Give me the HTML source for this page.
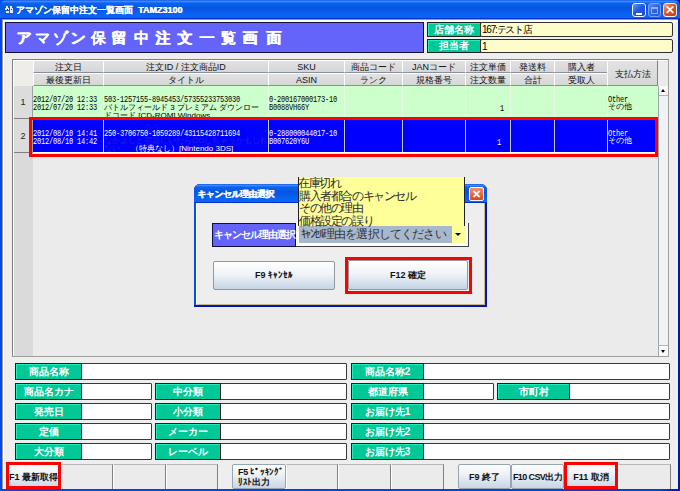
<!DOCTYPE html><html><head><meta charset="utf-8"><style>
*{margin:0;padding:0;box-sizing:border-box}
html,body{width:680px;height:491px;overflow:hidden;background:linear-gradient(90deg,#0048f0,#0048f0 670px,#0010b0 680px);font-family:"Liberation Sans",sans-serif}
div{position:absolute}
.gl{background:#00c896;box-shadow:inset 1px 1px 0 #20f0c0;border:1px solid #202020;color:#fff;font-weight:bold;font-size:10px;text-align:center;line-height:14px;white-space:nowrap}
.wi{background:#fff;border:1px solid #383838;border-radius:1px}
.hc{background:linear-gradient(#e2e2e2,#d6d6d6);border-top:1px solid #fff;border-bottom:1px solid #8890a0;border-right:1px solid #7880a0;color:#111;font-size:9px;text-align:center;line-height:11px;padding-top:1px;white-space:nowrap;overflow:hidden}
.fk{background:linear-gradient(#fdfdfd,#eef2f6 40%,#c8d6e4);border:1px solid #98a4b0;border-radius:2px;color:#111;font-weight:bold;font-size:9px;text-align:center;white-space:nowrap;letter-spacing:-0.7px}
.fe{background:#ebebeb;border-right:1px solid #808080;border-left:1px solid #fff;border-top:1px solid #b8b8b8}
</style></head><body>
<div style="position:absolute;left:0px;top:0px;width:680px;height:19px;background:linear-gradient(#1a5ae6 0px,#3a8aff 1.5px,#0a64f2 3px,#0556e0 8px,#0a62f2 14px,#0a64f4 17.5px,#0030d0 18px,#0030d0 19px);border-radius:6px 6px 0 0"></div>
<svg style="position:absolute;left:5px;top:6px" width="9" height="8" viewBox="0 0 9 8"><g fill="#e8e8ff"><rect x="1" y="0" width="2" height="2"/><rect x="5" y="0" width="2" height="2" fill="#f0f0a0"/><rect x="0" y="2" width="4" height="2"/><rect x="5" y="2" width="3" height="3"/><rect x="1" y="5" width="3" height="2"/><rect x="5" y="5" width="3" height="2"/></g><rect x="2" y="3" width="1" height="1" fill="#1030a0"/><rect x="6" y="3" width="1" height="1" fill="#1030a0"/></svg>
<div style="position:absolute;left:16px;top:3px;width:284px;height:14px;color:#fff;font-size:9px;font-weight:bold;line-height:14px;white-space:nowrap;letter-spacing:0px;text-shadow:0.4px 0 0 #fff">アマゾン保留中注文一覧画面&nbsp;&nbsp;TAMZ3100</div>
<div style="position:absolute;left:632px;top:3px;width:14px;height:14px;background:linear-gradient(135deg,#6a9af4,#2458e4 45%,#1a4ad8);border:1px solid #f0f4ff;border-radius:3px"><div style="left:3px;top:9px;width:6px;height:2px;background:#fff"></div></div>
<div style="position:absolute;left:648px;top:3px;width:13px;height:14px;background:linear-gradient(135deg,#5a8cf0,#2a64e8 50%,#2458e0);border:1px solid #7aa0f0;border-radius:3px"><div style="left:2px;top:3px;width:7px;height:7px;border:1px solid #8ab0f0;border-top-width:2px"></div></div>
<div style="position:absolute;left:663px;top:3px;width:14px;height:14px;background:linear-gradient(135deg,#f0a080,#e05424 45%,#c83c10);border:1px solid #f8f0f0;border-radius:3px;color:#fff;font-size:12px;font-weight:bold;line-height:13px;text-align:center">✕</div>
<div style="position:absolute;left:2px;top:19px;width:676px;height:470px;background:#eeeeee;border-top:1px solid #a09c80;border-left:1px solid #a09c80"></div>
<div style="position:absolute;left:3px;top:20px;width:675px;height:2px;background:#fff"></div>
<div style="position:absolute;left:3px;top:20px;width:1px;height:469px;background:#fff"></div>
<div style="position:absolute;left:5px;top:22px;width:419px;height:31px;background:#6464fa;border:1px solid #101040"><div style="left:10.0px;top:6px;color:#fff;font-size:15px;font-weight:bold;line-height:17px;text-shadow:0.6px 0 0 #fff">ア</div><div style="left:28.5px;top:6px;color:#fff;font-size:15px;font-weight:bold;line-height:17px;text-shadow:0.6px 0 0 #fff">マ</div><div style="left:46.7px;top:6px;color:#fff;font-size:15px;font-weight:bold;line-height:17px;text-shadow:0.6px 0 0 #fff">ゾ</div><div style="left:64.4px;top:6px;color:#fff;font-size:15px;font-weight:bold;line-height:17px;text-shadow:0.6px 0 0 #fff">ン</div><div style="left:84.5px;top:6px;color:#fff;font-size:15px;font-weight:bold;line-height:17px;text-shadow:0.6px 0 0 #fff">保</div><div style="left:105.0px;top:6px;color:#fff;font-size:15px;font-weight:bold;line-height:17px;text-shadow:0.6px 0 0 #fff">留</div><div style="left:127.7px;top:6px;color:#fff;font-size:15px;font-weight:bold;line-height:17px;text-shadow:0.6px 0 0 #fff">中</div><div style="left:149.0px;top:6px;color:#fff;font-size:15px;font-weight:bold;line-height:17px;text-shadow:0.6px 0 0 #fff">注</div><div style="left:171.0px;top:6px;color:#fff;font-size:15px;font-weight:bold;line-height:17px;text-shadow:0.6px 0 0 #fff">文</div><div style="left:193.0px;top:6px;color:#fff;font-size:15px;font-weight:bold;line-height:17px;text-shadow:0.6px 0 0 #fff">一</div><div style="left:214.8px;top:6px;color:#fff;font-size:15px;font-weight:bold;line-height:17px;text-shadow:0.6px 0 0 #fff">覧</div><div style="left:236.0px;top:6px;color:#fff;font-size:15px;font-weight:bold;line-height:17px;text-shadow:0.6px 0 0 #fff">画</div><div style="left:260.0px;top:6px;color:#fff;font-size:15px;font-weight:bold;line-height:17px;text-shadow:0.6px 0 0 #fff">面</div></div>
<div style="position:absolute;left:427px;top:22px;width:54px;height:15px;"></div>
<div class="gl" style="left:427px;top:22px;width:54px;height:15px">店舗名称</div>
<div style="left:480px;top:22px;width:193px;height:15px;border-radius:2px;background:#fffccc;border:1px solid #303030;font-size:10px;line-height:13px;color:#000;padding-left:1px;white-space:nowrap;letter-spacing:-1.2px">167:テスト店</div>
<div class="gl" style="left:427px;top:39px;width:54px;height:14px;line-height:12px">担当者</div>
<div style="left:480px;top:39px;width:193px;height:14px;border-radius:2px;background:#fffccc;border:1px solid #303030;font-size:10px;line-height:13px;color:#000;padding-left:1px">1</div>
<div style="position:absolute;left:12px;top:59px;width:657px;height:298px;background:#ebebeb;border-top:1px solid #808080;border-left:1px solid #808080;border-bottom:1px solid #a0a0a0;border-right:1px solid #a0a0a0"></div>
<div style="position:absolute;left:13px;top:60px;width:655px;height:1px;background:#fff"></div>
<div style="position:absolute;left:13px;top:60px;width:1px;height:296px;background:#fff"></div>
<div style="position:absolute;left:14px;top:153px;width:19px;height:203px;background:#dadada"></div>
<div style="position:absolute;left:14px;top:61px;width:19px;height:25px;background:#eeedea"></div>
<div class="hc" style="left:33px;top:60px;width:71px;height:13px;border-left:1px solid #fff">注文日</div>
<div class="hc" style="left:33px;top:73px;width:71px;height:13px;border-left:1px solid #fff">最後更新日</div>
<div class="hc" style="left:103px;top:60px;width:166px;height:13px;border-left:1px solid #fff">注文ID / 注文商品ID</div>
<div class="hc" style="left:103px;top:73px;width:166px;height:13px;border-left:1px solid #fff">タイトル</div>
<div class="hc" style="left:268px;top:60px;width:77px;height:13px;border-left:1px solid #fff">SKU</div>
<div class="hc" style="left:268px;top:73px;width:77px;height:13px;border-left:1px solid #fff">ASIN</div>
<div class="hc" style="left:344px;top:60px;width:59px;height:13px;border-left:1px solid #fff">商品コード</div>
<div class="hc" style="left:344px;top:73px;width:59px;height:13px;border-left:1px solid #fff">ランク</div>
<div class="hc" style="left:402px;top:60px;width:64px;height:13px;border-left:1px solid #fff">JANコード</div>
<div class="hc" style="left:402px;top:73px;width:64px;height:13px;border-left:1px solid #fff">規格番号</div>
<div class="hc" style="left:465px;top:60px;width:46px;height:13px;border-left:1px solid #fff">注文単価</div>
<div class="hc" style="left:465px;top:73px;width:46px;height:13px;border-left:1px solid #fff">注文数量</div>
<div class="hc" style="left:510px;top:60px;width:45px;height:13px;border-left:1px solid #fff">発送料</div>
<div class="hc" style="left:510px;top:73px;width:45px;height:13px;border-left:1px solid #fff">合計</div>
<div class="hc" style="left:554px;top:60px;width:54px;height:13px;border-left:1px solid #fff">購入者</div>
<div class="hc" style="left:554px;top:73px;width:54px;height:13px;border-left:1px solid #fff">受取人</div>
<div class="hc" style="left:607px;top:60px;width:51px;height:26px;line-height:24px;border-left:1px solid #fff">支払方法</div>
<div style="position:absolute;left:658px;top:61px;width:10px;height:25px;background:#ebebeb"></div>
<div style="left:14px;top:86px;width:19px;height:33px;background:#dcdcdc;border-bottom:1px solid #808080;border-right:1px solid #a0a0a0;font-size:9px;color:#222;text-align:center;line-height:33px">1</div>
<div style="left:14px;top:119px;width:19px;height:34px;background:#dcdcdc;border-bottom:1px solid #808080;border-right:1px solid #a0a0a0;font-size:9px;color:#222;text-align:center;line-height:34px">2</div>
<div style="position:absolute;left:33px;top:86px;width:624px;height:32px;background:#ccffcc"></div>
<div style="position:absolute;left:103px;top:86px;width:1px;height:32px;background:#e8f8e8"></div>
<div style="position:absolute;left:268px;top:86px;width:1px;height:32px;background:#e8f8e8"></div>
<div style="position:absolute;left:344px;top:86px;width:1px;height:32px;background:#e8f8e8"></div>
<div style="position:absolute;left:402px;top:86px;width:1px;height:32px;background:#e8f8e8"></div>
<div style="position:absolute;left:465px;top:86px;width:1px;height:32px;background:#e8f8e8"></div>
<div style="position:absolute;left:510px;top:86px;width:1px;height:32px;background:#e8f8e8"></div>
<div style="position:absolute;left:554px;top:86px;width:1px;height:32px;background:#e8f8e8"></div>
<div style="position:absolute;left:607px;top:86px;width:1px;height:32px;background:#e8f8e8"></div>
<div style="position:absolute;left:33px;top:118px;width:624px;height:1px;background:#909090"></div>
<div style="position:absolute;left:33px;top:119px;width:624px;height:33px;background:#0000ff"></div>
<div style="position:absolute;left:103px;top:119px;width:1px;height:33px;background:#c0c8ff"></div>
<div style="position:absolute;left:268px;top:119px;width:1px;height:33px;background:#c0c8ff"></div>
<div style="position:absolute;left:344px;top:119px;width:1px;height:33px;background:#c0c8ff"></div>
<div style="position:absolute;left:402px;top:119px;width:1px;height:33px;background:#c0c8ff"></div>
<div style="position:absolute;left:465px;top:119px;width:1px;height:33px;background:#c0c8ff"></div>
<div style="position:absolute;left:510px;top:119px;width:1px;height:33px;background:#c0c8ff"></div>
<div style="position:absolute;left:554px;top:119px;width:1px;height:33px;background:#c0c8ff"></div>
<div style="position:absolute;left:607px;top:119px;width:1px;height:33px;background:#c0c8ff"></div>
<div style="position:absolute;left:33px;top:152px;width:624px;height:1px;background:#ffffff"></div>
<div style="left:33px;top:94px;font-family:'Liberation Mono',monospace;font-size:7px;line-height:9px;letter-spacing:-0.2px;white-space:pre;color:#000;transform:scaleY(1.25);transform-origin:0 0">2012/07/20 12:33</div>
<div style="left:33px;top:102px;font-family:'Liberation Mono',monospace;font-size:7px;line-height:9px;letter-spacing:-0.2px;white-space:pre;color:#000;transform:scaleY(1.25);transform-origin:0 0">2012/07/20 12:33</div>
<div style="left:103px;top:86px;width:165px;height:31px;overflow:hidden">
<div style="left:1px;top:8px;font-family:'Liberation Mono',monospace;font-size:7px;line-height:9px;letter-spacing:-0.2px;white-space:pre;color:#000;transform:scaleY(1.25);transform-origin:0 0">503-1257155-8945453/57355233753030</div>
<div style="left:1px;top:18px;font-size:8px;line-height:8px;white-space:pre;color:#000">バトルフィールド 3 プレミアム ダウンロー</div>
<div style="left:1px;top:26px;font-size:8px;line-height:8px;white-space:pre;color:#000">ドコード [CD-ROM] Windows</div>
</div>
<div style="left:269px;top:94px;font-family:'Liberation Mono',monospace;font-size:7px;line-height:9px;letter-spacing:-0.2px;white-space:pre;color:#000;transform:scaleY(1.25);transform-origin:0 0">0-200167000173-10</div>
<div style="left:269px;top:102px;font-family:'Liberation Mono',monospace;font-size:7px;line-height:9px;letter-spacing:-0.2px;white-space:pre;color:#000;transform:scaleY(1.25);transform-origin:0 0">B0088VH66Y</div>
<div style="left:500px;top:103px;font-family:'Liberation Mono',monospace;font-size:7px;line-height:9px;letter-spacing:-0.2px;white-space:pre;color:#000;transform:scaleY(1.25);transform-origin:0 0">1</div>
<div style="left:608px;top:94px;font-family:'Liberation Mono',monospace;font-size:7px;line-height:9px;letter-spacing:-0.2px;white-space:pre;color:#000;transform:scaleY(1.25);transform-origin:0 0">Other</div>
<div style="left:608px;top:103px;font-size:8px;line-height:8px;white-space:pre;color:#000">その他</div>
<div style="left:33px;top:128px;font-family:'Liberation Mono',monospace;font-size:7px;line-height:9px;letter-spacing:-0.2px;white-space:pre;color:#fff;transform:scaleY(1.25);transform-origin:0 0">2012/08/10 14:41</div>
<div style="left:33px;top:136px;font-family:'Liberation Mono',monospace;font-size:7px;line-height:9px;letter-spacing:-0.2px;white-space:pre;color:#fff;transform:scaleY(1.25);transform-origin:0 0">2012/08/10 14:42</div>
<div style="left:103px;top:119px;width:165px;height:33px;overflow:hidden">
<div style="left:1px;top:9px;font-family:'Liberation Mono',monospace;font-size:7px;line-height:9px;letter-spacing:-0.2px;white-space:pre;color:#fff;transform:scaleY(1.25);transform-origin:0 0">250-3706750-1059289/43115428711694</div>
<div style="left:1px;top:18px;font-size:8px;line-height:8px;white-space:pre;color:#2020e0">なかよしと宿題にいたらOOしちゃうかもしれ</div>
<div style="left:1px;top:26px;font-size:8px;line-height:8px;white-space:pre;color:#2020e0">ない</div>
<div style="left:28px;top:26px;font-size:8px;line-height:8px;white-space:pre;color:#fff">（特典なし）[Nintendo 3DS]</div>
</div>
<div style="left:269px;top:128px;font-family:'Liberation Mono',monospace;font-size:7px;line-height:9px;letter-spacing:-0.2px;white-space:pre;color:#fff;transform:scaleY(1.25);transform-origin:0 0">0-288000044017-10</div>
<div style="left:269px;top:136px;font-family:'Liberation Mono',monospace;font-size:7px;line-height:9px;letter-spacing:-0.2px;white-space:pre;color:#fff;transform:scaleY(1.25);transform-origin:0 0">B007620Y6U</div>
<div style="left:497px;top:137px;font-family:'Liberation Mono',monospace;font-size:7px;line-height:9px;letter-spacing:-0.2px;white-space:pre;color:#fff;transform:scaleY(1.25);transform-origin:0 0">1</div>
<div style="left:608px;top:128px;font-family:'Liberation Mono',monospace;font-size:7px;line-height:9px;letter-spacing:-0.2px;white-space:pre;color:#fff;transform:scaleY(1.25);transform-origin:0 0">Other</div>
<div style="left:608px;top:137px;font-size:8px;line-height:8px;white-space:pre;color:#fff">その他</div>
<div style="position:absolute;left:29px;top:117px;width:629px;height:40px;border:3px solid #ff0000"></div>
<div style="position:absolute;left:658px;top:86px;width:10px;height:270px;background:#f0f2f4;border-left:1px solid #98a8b0"></div>
<div style="position:absolute;left:659px;top:86px;width:9px;height:10px;background:#f8f8f8;border-bottom:1px solid #a8b8c0"><div style="left:2px;top:3px;width:0;height:0;border-left:2.5px solid transparent;border-right:2.5px solid transparent;border-bottom:3px solid #000"></div></div>
<div style="position:absolute;left:659px;top:345px;width:9px;height:11px;background:#f8f8f8;border-top:1px solid #a8b8c0"><div style="left:2px;top:4px;width:0;height:0;border-left:2.5px solid transparent;border-right:2.5px solid transparent;border-top:3px solid #000"></div></div>
<div class="wi" style="left:81px;top:363px;width:266px;height:17px"></div>
<div class="gl" style="left:15px;top:363px;width:67px;height:17px;line-height:15px">商品名称</div>
<div class="wi" style="left:81px;top:383px;width:71px;height:17px"></div>
<div class="gl" style="left:15px;top:383px;width:67px;height:17px;line-height:15px">商品名カナ</div>
<div class="wi" style="left:81px;top:403px;width:71px;height:17px"></div>
<div class="gl" style="left:15px;top:403px;width:67px;height:17px;line-height:15px">発売日</div>
<div class="wi" style="left:81px;top:423px;width:71px;height:17px"></div>
<div class="gl" style="left:15px;top:423px;width:67px;height:17px;line-height:15px">定価</div>
<div class="wi" style="left:81px;top:443px;width:71px;height:17px"></div>
<div class="gl" style="left:15px;top:443px;width:67px;height:17px;line-height:15px">大分類</div>
<div class="wi" style="left:220px;top:383px;width:127px;height:17px"></div>
<div class="gl" style="left:155px;top:383px;width:66px;height:17px;line-height:15px">中分類</div>
<div class="wi" style="left:220px;top:403px;width:127px;height:17px"></div>
<div class="gl" style="left:155px;top:403px;width:66px;height:17px;line-height:15px">小分類</div>
<div class="wi" style="left:220px;top:423px;width:127px;height:17px"></div>
<div class="gl" style="left:155px;top:423px;width:66px;height:17px;line-height:15px">メーカー</div>
<div class="wi" style="left:220px;top:443px;width:127px;height:17px"></div>
<div class="gl" style="left:155px;top:443px;width:66px;height:17px;line-height:15px">レーベル</div>
<div class="wi" style="left:423px;top:363px;width:247px;height:17px"></div>
<div class="gl" style="left:351px;top:363px;width:73px;height:17px;line-height:15px">商品名称2</div>
<div class="wi" style="left:423px;top:383px;width:71px;height:17px"></div>
<div class="gl" style="left:351px;top:383px;width:73px;height:17px;line-height:15px">都道府県</div>
<div class="wi" style="left:569px;top:383px;width:101px;height:17px"></div>
<div class="gl" style="left:497px;top:383px;width:73px;height:17px;line-height:15px">市町村</div>
<div class="wi" style="left:423px;top:403px;width:247px;height:17px"></div>
<div class="gl" style="left:351px;top:403px;width:73px;height:17px;line-height:15px">お届け先1</div>
<div class="wi" style="left:423px;top:423px;width:247px;height:17px"></div>
<div class="gl" style="left:351px;top:423px;width:73px;height:17px;line-height:15px">お届け先2</div>
<div class="wi" style="left:423px;top:443px;width:247px;height:17px"></div>
<div class="gl" style="left:351px;top:443px;width:73px;height:17px;line-height:15px">お届け先3</div>
<div style="position:absolute;left:3px;top:462px;width:674px;height:27px;background:#eeeeee"></div>
<div class="fk" style="left:6px;top:464px;width:55px;height:25px;line-height:25px;letter-spacing:0px">F1 最新取得</div>
<div class="fe" style="left:61px;top:464px;width:52px;height:25px"></div>
<div class="fe" style="left:113px;top:464px;width:53px;height:25px"></div>
<div class="fe" style="left:166px;top:464px;width:52px;height:25px"></div>
<div class="fk" style="left:232px;top:464px;width:54px;height:25px;line-height:10px;padding-top:2px;text-align:left;padding-left:5px;letter-spacing:-0.3px">F5 ﾋﾟｯｷﾝｸﾞ<br>ﾘｽﾄ出力</div>
<div class="fe" style="left:286px;top:464px;width:52px;height:25px"></div>
<div class="fe" style="left:338px;top:464px;width:53px;height:25px"></div>
<div class="fe" style="left:391px;top:464px;width:53px;height:25px"></div>
<div class="fk" style="left:458px;top:464px;width:53px;height:25px;line-height:25px;letter-spacing:0px">F9 終了</div>
<div class="fk" style="left:511px;top:464px;width:53px;height:25px;line-height:25px;letter-spacing:-0.6px">F10 CSV出力</div>
<div class="fk" style="left:564px;top:464px;width:54px;height:25px;line-height:25px;letter-spacing:0px">F11 取消</div>
<div class="fe" style="left:618px;top:464px;width:53px;height:25px"></div>
<div style="position:absolute;left:6px;top:462px;width:55px;height:27px;border:3px solid #ff0000"></div>
<div style="position:absolute;left:564px;top:462px;width:54px;height:27px;border:3px solid #ff0000"></div>
<div style="position:absolute;left:0px;top:489px;width:680px;height:2px;background:linear-gradient(90deg,#0048f0,#0040e0 660px,#0010b0)"></div>
<div style="position:absolute;left:194px;top:184px;width:293px;height:123px;background:#0018b0;border-radius:6px 6px 0 0"></div>
<div style="position:absolute;left:194px;top:184px;width:291px;height:121px;background:#0050f0;border-radius:6px 6px 0 0"></div>
<div style="position:absolute;left:194px;top:184px;width:293px;height:19px;background:linear-gradient(#1a5ae6 0px,#3a8aff 1.5px,#0a64f2 3px,#0556e0 8px,#0a62f2 14px,#0a64f4 17.5px,#0030d0 18px,#0030d0 19px);border-radius:6px 6px 0 0"></div>
<div style="position:absolute;left:197px;top:187px;width:203px;height:15px;color:#fff;font-size:9px;font-weight:bold;line-height:15px;white-space:nowrap;letter-spacing:-0.5px;text-shadow:0.5px 0 0 #fff">キャンセル理由選択</div>
<div style="position:absolute;left:469px;top:187px;width:15px;height:14px;background:linear-gradient(#f09070,#d84820);border:1px solid #fff;border-radius:2px;color:#fff;font-size:11px;font-weight:bold;line-height:12px;text-align:center">✕</div>
<div style="position:absolute;left:196px;top:203px;width:289px;height:102px;background:#eeeeee;border-left:1px solid #fff;border-bottom:1px solid #c8b890;border-right:1px solid #c8b890"></div>
<div style="position:absolute;left:212px;top:223px;width:84px;height:24px;background:#6464fa;border:1px solid #101040;color:#fff;font-size:10px;font-weight:bold;line-height:22px;text-align:center;white-space:nowrap;letter-spacing:-1px">キャンセル理由選択</div>
<div style="position:absolute;left:296px;top:223px;width:173px;height:24px;background:#fff;border-bottom:1px solid #404040;border-right:1px solid #404040"></div>
<div style="position:absolute;left:299px;top:226px;width:153px;height:17px;background:#a8b8cc;color:#333;font-size:12px;line-height:17px;white-space:nowrap;padding-left:2px;letter-spacing:-0.85px"><span style="letter-spacing:-1.6px">ｷｬﾝｾﾙ</span>理由を選択してください</div>
<div style="position:absolute;left:452px;top:226px;width:13px;height:17px;background:#ffff99"><div style="left:3px;top:7px;width:0;height:0;border-left:3.5px solid transparent;border-right:3.5px solid transparent;border-top:3.5px solid #000"></div></div>
<div style="position:absolute;left:213px;top:261px;width:122px;height:29px;background:linear-gradient(#fefefe,#f0f4f8 45%,#c4d4e4);border:1px solid #9098a0;border-radius:2px;font-size:9px;font-weight:bold;text-align:center;line-height:27px;color:#111">F9 ｷｬﾝｾﾙ</div>
<div style="position:absolute;left:345px;top:257px;width:127px;height:37px;border:3px solid #ff0000"></div>
<div style="position:absolute;left:348px;top:260px;width:120px;height:30px;background:linear-gradient(#fefefe,#f0f4f8 45%,#c4d4e4);border:1px solid #9098a0;border-radius:2px;font-size:9px;font-weight:bold;text-align:center;line-height:28px;color:#111">F12 確定</div>
<div style="position:absolute;left:298px;top:177px;width:167px;height:49px;background:#ffff99;border-left:1px solid #202020;border-right:1px solid #202020;color:#2a2a2a;font-size:12px;line-height:12.5px;white-space:nowrap;padding-left:0px;padding-top:0px;letter-spacing:-1.4px;text-indent:-1px">在庫切れ<br>購入者都合のキャンセル<br>その他の理由<br>価格設定の誤り</div>
</body></html>
